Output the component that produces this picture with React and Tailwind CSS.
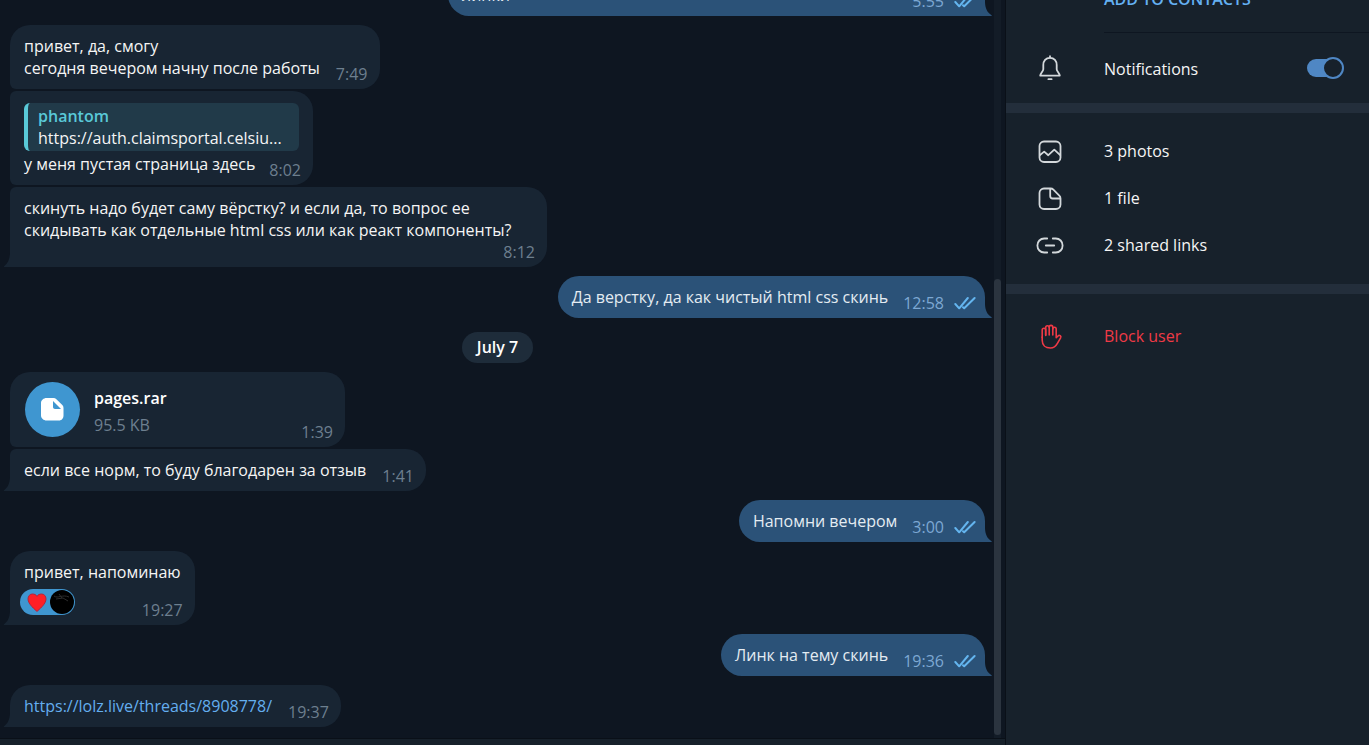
import React from "react";

const corners = {
  inSingle: "rounded-[20px] rounded-bl-none",
  inFirst: "rounded-[20px] rounded-bl-md",
  inMiddle: "rounded-[20px] rounded-l-md",
  inLast: "rounded-[20px] rounded-tl-md rounded-bl-none",
  out: "rounded-[21px] rounded-br-none",
};

function Tail({ out }) {
  return out ? (
    <svg aria-hidden="true" viewBox="0 0 7 14" className="absolute bottom-0 left-full h-3.5 w-[7px] fill-[#2b5278]">
      <path d="M0 0C0.2 6 2 10.5 6.6 13.2C7 13.6 6.8 14 6 14H0Z" />
    </svg>
  ) : (
    <svg aria-hidden="true" viewBox="0 0 7 14" className="absolute right-full bottom-0 h-3.5 w-[7px] fill-[#182533]">
      <path d="M7 0C6.8 6 5 10.5 1 13.2C0.6 13.6 0.8 14 1.6 14H7Z" />
    </svg>
  );
}

function Bubble({ shape, tail, className = "", children }) {
  const out = shape === "out";
  return (
    <div
      className={`relative max-w-full ${corners[shape]} ${out ? "bg-[#2b5278] text-[#e4ecf2]" : "bg-[#182533] text-[#f5f5f5]"} ${className}`}
    >
      {children}
      {tail && <Tail out={out} />}
    </div>
  );
}

function Time({ children }) {
  return <time className="shrink-0 self-end pr-3 pb-1 text-[#6d7f8f]">{children}</time>;
}

function Checks() {
  return (
    <svg
      role="img"
      aria-label="Read"
      viewBox="0 0 22 14"
      className="h-3.5 w-[22px] fill-none stroke-[#64b5ef] stroke-2"
      strokeLinecap="round"
      strokeLinejoin="round"
    >
      <path d="M1.3 8L5.2 12.3L13.8 2" />
      <path d="M9 11.2L10.2 12.3L20.6 2" />
    </svg>
  );
}

function Incoming({ shape, tail, time, children }) {
  return (
    <Bubble shape={shape} tail={tail} className="flex gap-4 pt-2.5 pl-3.5">
      <p className="pb-2.5">{children}</p>
      <Time>{time}</Time>
    </Bubble>
  );
}

function Outgoing({ time, className = "", children }) {
  return (
    <Bubble shape="out" tail className={`flex justify-between gap-[15px] pt-2.5 pl-3.5 ${className}`}>
      <p className="pb-2.5">{children}</p>
      <span className="flex shrink-0 items-center gap-2.5 self-end pr-[9px] pb-1">
        <time className="text-[#7da8d3]">{time}</time>
        <Checks />
      </span>
    </Bubble>
  );
}

function Icon({ children, className = "stroke-[#d3d8db] stroke-[1.8]" }) {
  return (
    <svg
      aria-hidden="true"
      viewBox="0 0 28 28"
      className={`h-7 w-7 shrink-0 fill-none ${className}`}
      strokeLinecap="round"
      strokeLinejoin="round"
    >
      {children}
    </svg>
  );
}

function Row({ icon, className = "", children }) {
  return (
    <button type="button" className={`flex h-[47px] w-full items-center gap-10 pl-[30px] text-left ${className}`}>
      {icon}
      {children}
    </button>
  );
}

function Messages() {
  return (
    <ol className="flex min-w-0 flex-1 flex-col items-start justify-end overflow-hidden pr-[9px] pb-[11px] pl-2.5">
      <li className="mb-[9px] shrink-0 self-end">
        <Outgoing time="5:55" className="w-[537px]">линки</Outgoing>
      </li>
      <li className="mb-0.5 shrink-0">
        <Incoming shape="inFirst" time="7:49">
          привет, да, смогу
          <br />
          сегодня вечером начну после работы
        </Incoming>
      </li>
      <li className="mb-0.5 shrink-0">
        <Bubble shape="inMiddle" className="w-[303px] pt-3 pl-3.5">
          <blockquote className="mr-3.5 mb-0.5 rounded-md border-l-4 border-[#59c9d8] bg-[#213a49] py-0.5 pr-3 pl-2.5">
            <p className="font-semibold text-[#59c9d8]">phantom</p>
            <p className="truncate">https://auth.claimsportal.celsiu...</p>
          </blockquote>
          <div className="flex justify-between">
            <p className="pb-2.5">у меня пустая страница здесь</p>
            <Time>8:02</Time>
          </div>
        </Bubble>
      </li>
      <li className="mb-[9px] shrink-0">
        <Bubble shape="inLast" tail className="flex w-[537px] flex-col pt-2.5 pl-3.5">
          <p className="pr-3.5">
            скинуть надо будет саму вёрстку? и если да, то вопрос ее скидывать как отдельные html css или как реакт
            компоненты?
          </p>
          <Time>8:12</Time>
        </Bubble>
      </li>
      <li className="mb-3.5 shrink-0 self-end">
        <Outgoing time="12:58">Да верстку, да как чистый html css скинь</Outgoing>
      </li>
      <li className="mb-[9px] shrink-0 self-center rounded-full bg-[#1e2c3a] px-[15px] pt-1 pb-[5px] font-semibold text-white">
        July 7
      </li>
      <li className="mb-0.5 shrink-0">
        <Bubble shape="inFirst" className="flex w-[335px] pt-2.5 pl-[15px]">
          <button
            type="button"
            aria-label="Download pages.rar"
            className="mr-3.5 mb-2.5 flex h-[55px] w-[55px] shrink-0 items-center justify-center rounded-full bg-[#3f96d0]"
          >
            <svg viewBox="0 0 24 24" className="h-6 w-6">
              <path
                className="fill-white"
                d="M5.5 0H12.5C13.6 0 14.6 0.4 15.4 1.2L21.3 7.1C22.1 7.9 22.5 8.9 22.5 10V17.5C22.5 20.3 20.8 22.5 18 22.5H5.5C2.7 22.5 0 20.3 0 17.5V5C0 2.2 2.7 0 5.5 0Z"
              />
              <path className="fill-[#3f96d0]" d="M12 3L20 11H14C12.9 11 12 10.1 12 9Z" />
            </svg>
          </button>
          <div className="flex flex-1 flex-col gap-[5px] pt-[5px]">
            <p className="font-semibold text-white">pages.rar</p>
            <p className="text-[#6d7f8f]">95.5 KB</p>
          </div>
          <Time>1:39</Time>
        </Bubble>
      </li>
      <li className="mb-[9px] shrink-0">
        <Incoming shape="inLast" tail time="1:41">если все норм, то буду благодарен за отзыв</Incoming>
      </li>
      <li className="mb-[9px] shrink-0 self-end">
        <Outgoing time="3:00">Напомни вечером</Outgoing>
      </li>
      <li className="mb-[9px] shrink-0">
        <Bubble shape="inSingle" tail className="pt-2.5">
          <p className="mb-1.5 px-3.5">привет, напоминаю</p>
          <div className="flex justify-between">
            <button
              type="button"
              aria-label="Heart reaction"
              className="mb-2.5 ml-2.5 flex h-[26px] w-[55px] items-center justify-end gap-[3px] rounded-full bg-[#3f96d0] pr-px"
            >
              <svg viewBox="0 0 20 19" className="h-[19px] w-5">
                <path
                  className="fill-[#ff1f26] stroke-[#b3243c]"
                  d="M10 18.4C8.4 16.9 1 11.2 1 6C1 3 2.9 1 5.4 1C7.5 1 9.2 1.8 10 3.4C10.8 1.8 12.5 1 14.6 1C17.1 1 19 3 19 6C19 11.2 11.6 16.9 10 18.4Z"
                />
              </svg>
              <svg viewBox="0 0 24 24" className="h-6 w-6">
                <circle cx="12" cy="12" r="12" className="fill-black" />
                <path className="fill-none stroke-[#2c2c2c]" d="M4 6C8 9 12 4 19 7M6 9L13 8L18 11M9 4L12 8" />
              </svg>
            </button>
            <Time>19:27</Time>
          </div>
        </Bubble>
      </li>
      <li className="mb-[9px] shrink-0 self-end">
        <Outgoing time="19:36">Линк на тему скинь</Outgoing>
      </li>
      <li className="shrink-0">
        <Incoming shape="inSingle" tail time="19:37">
          <a href="https://lolz.live/threads/8908778/" className="text-[#64aeef]">
            https://lolz.live/threads/8908778/
          </a>
        </Incoming>
      </li>
    </ol>
  );
}

function Profile() {
  return (
    <aside className="w-[363px] shrink-0 overflow-hidden bg-[#17212b] text-[#f5f5f5]">
      <div className="-mt-3 ml-[98px] border-b border-[#0e1621] pb-[22px]">
        <button type="button" className="block font-semibold text-[#64b0f2]">
          ADD TO CONTACTS
        </button>
      </div>
      <label className="flex h-[70px] items-center gap-10 pr-[25px] pl-[30px]">
        <Icon>
          <path d="M14 2.2V3.6" />
          <path d="M14 3.8C9.8 3.8 7.3 7 7.3 11V15.2C7.3 17.2 4.6 19.2 4.2 21.6H23.8C23.4 19.2 20.7 17.2 20.7 15.2V11C20.7 7 18.2 3.8 14 3.8Z" />
          <path d="M12.4 25.2H15.6" />
        </Icon>
        <span className="flex-1 pt-0.5">Notifications</span>
        <input
          type="checkbox"
          defaultChecked
          className="relative flex h-[22px] w-[37px] appearance-none items-center before:h-[18px] before:w-[30px] before:rounded-full before:bg-[#4f87c4] after:absolute after:right-0 after:h-[22px] after:w-[22px] after:rounded-full after:border-2 after:border-[#4f87c4] after:bg-[#17212b]"
        />
      </label>
      <div className="h-2.5 bg-[#232e3b]" />
      <nav className="pt-3.5 pb-4">
        <Row
          icon={
            <Icon>
              <rect x="3.5" y="4.5" width="21" height="20.5" rx="4.5" />
              <path d="M4 18L8.2 14.6L12.3 18.2L18.3 12.6L24.2 18.2" />
            </Icon>
          }
        >
          3 photos
        </Row>
        <Row
          icon={
            <Icon>
              <path d="M8 4.5H14.6C15.7 4.5 16.6 4.9 17.4 5.7L23.3 11.6C24.1 12.4 24.5 13.3 24.5 14.4V20.5C24.5 23 22.5 25 20 25H8C5.5 25 3.5 23 3.5 20.5V9C3.5 6.5 5.5 4.5 8 4.5Z" />
              <path d="M14.2 5V12C14.2 13.5 15.2 14.5 16.7 14.5H24" />
            </Icon>
          }
        >
          1 file
        </Row>
        <Row
          icon={
            <Icon>
              <path d="M11.2 7.5H8.2C4.3 7.5 1.4 10.5 1.4 14.5C1.4 18.5 4.3 21.5 8.2 21.5H11.2" />
              <path d="M16.8 7.5H19.8C23.7 7.5 26.6 10.5 26.6 14.5C26.6 18.5 23.7 21.5 19.8 21.5H16.8" />
              <path d="M9.8 14.5H18.2" />
            </Icon>
          }
        >
          2 shared links
        </Row>
      </nav>
      <div className="h-2.5 bg-[#232e3b]" />
      <Row
        className="mt-[18px] text-[#ef3a46]"
        icon={
          <Icon className="stroke-[#ef3a46] stroke-[1.6]">
            <path d="M6.2 15.5V8C6.2 5.6 9.7 5.6 9.7 8V13.5" />
            <path d="M9.7 13V5.6C9.7 3.2 13.2 3.2 13.2 5.6V13" />
            <path d="M13.2 5.2C13.2 2.8 16.8 2.8 16.8 5.2V13" />
            <path d="M16.8 7C16.8 4.6 20.2 4.6 20.2 7V15.8L22 14C23.4 12.6 25.6 13.9 24.6 15.8L21.4 21.4C19.9 24.2 17.8 26 14.4 26C9.4 26 6.2 22.8 6.2 18.2V15" />
          </Icon>
        }
      >
        Block user
      </Row>
    </aside>
  );
}

export default function App() {
  return (
    <div className="flex h-screen overflow-hidden bg-[#0e1621] font-['Open_Sans','Noto_Sans',sans-serif] text-base leading-[22px]">
      <main className="flex min-w-0 flex-1 flex-col">
        <div className="flex min-h-0 flex-1">
          <Messages />
          <div className="mr-1 flex w-[7px] flex-col justify-end bg-[#131c27] pb-[3px]">
            <div className="h-[62%] rounded-full bg-[#2b343f]" />
          </div>
        </div>
        <div className="h-[7px] shrink-0 border-t border-[#0a1018] bg-[#17212b]" />
      </main>
      <div className="w-px shrink-0 bg-[#0a1018]" />
      <Profile />
    </div>
  );
}
